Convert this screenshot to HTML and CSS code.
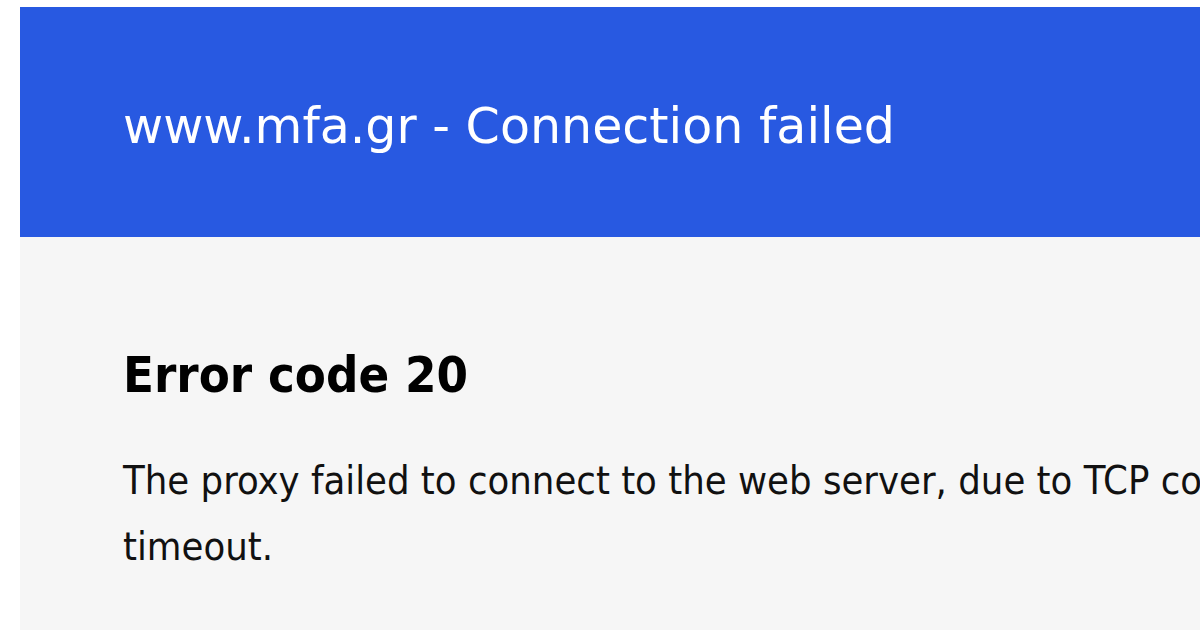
FILE: index.html
```html
<!DOCTYPE html>
<html lang="en">
<head>
<meta charset="utf-8">
<title>www.mfa.gr - Connection failed</title>
<link rel="stylesheet" href="styles.css">
</head>
<body>
<div class="page">
  <header class="banner">
    <h1 class="banner-title">www.mfa.gr - Connection failed</h1>
  </header>
  <main class="content">
    <h2 class="error-code">Error code 20</h2>
    <p class="error-text">The proxy failed to connect to the web server, due to TCP connection timeout.</p>
  </main>
</div>
</body>
</html>
```

FILE: styles.css
```css
html, body {
  margin: 0;
  padding: 0;
  background: #ffffff;
  overflow: hidden;
}

.page {
  width: 1600px;
  height: 630px;
  padding: 7px 0 0 20px;
  box-sizing: border-box;
  display: flex;
  flex-direction: column;
  font-family: "DejaVu Sans", Verdana, sans-serif;
}

.banner {
  background: #2859e1;
  height: 230px;
  padding: 95px 0 0 103px;
  box-sizing: border-box;
  flex: none;
}

.banner-title {
  margin: 0;
  color: #ffffff;
  font-weight: normal;
  font-size: 49.1px;
  line-height: 1;
  white-space: nowrap;
}

.content {
  flex: 1;
  background: #f6f6f6;
  padding: 113px 0 0 103px;
}

.error-code {
  margin: 0;
  font-family: "DejaVu Sans Condensed", "DejaVu Sans", sans-serif;
  font-weight: bold;
  font-size: 50.4px;
  line-height: 1;
  color: #000000;
}

.error-text {
  margin: 47px 0 0 0;
  width: 1320px;
  font-family: "DejaVu Sans Condensed", "DejaVu Sans", sans-serif;
  font-size: 39.6px;
  line-height: 66px;
  color: #111111;
}
```
